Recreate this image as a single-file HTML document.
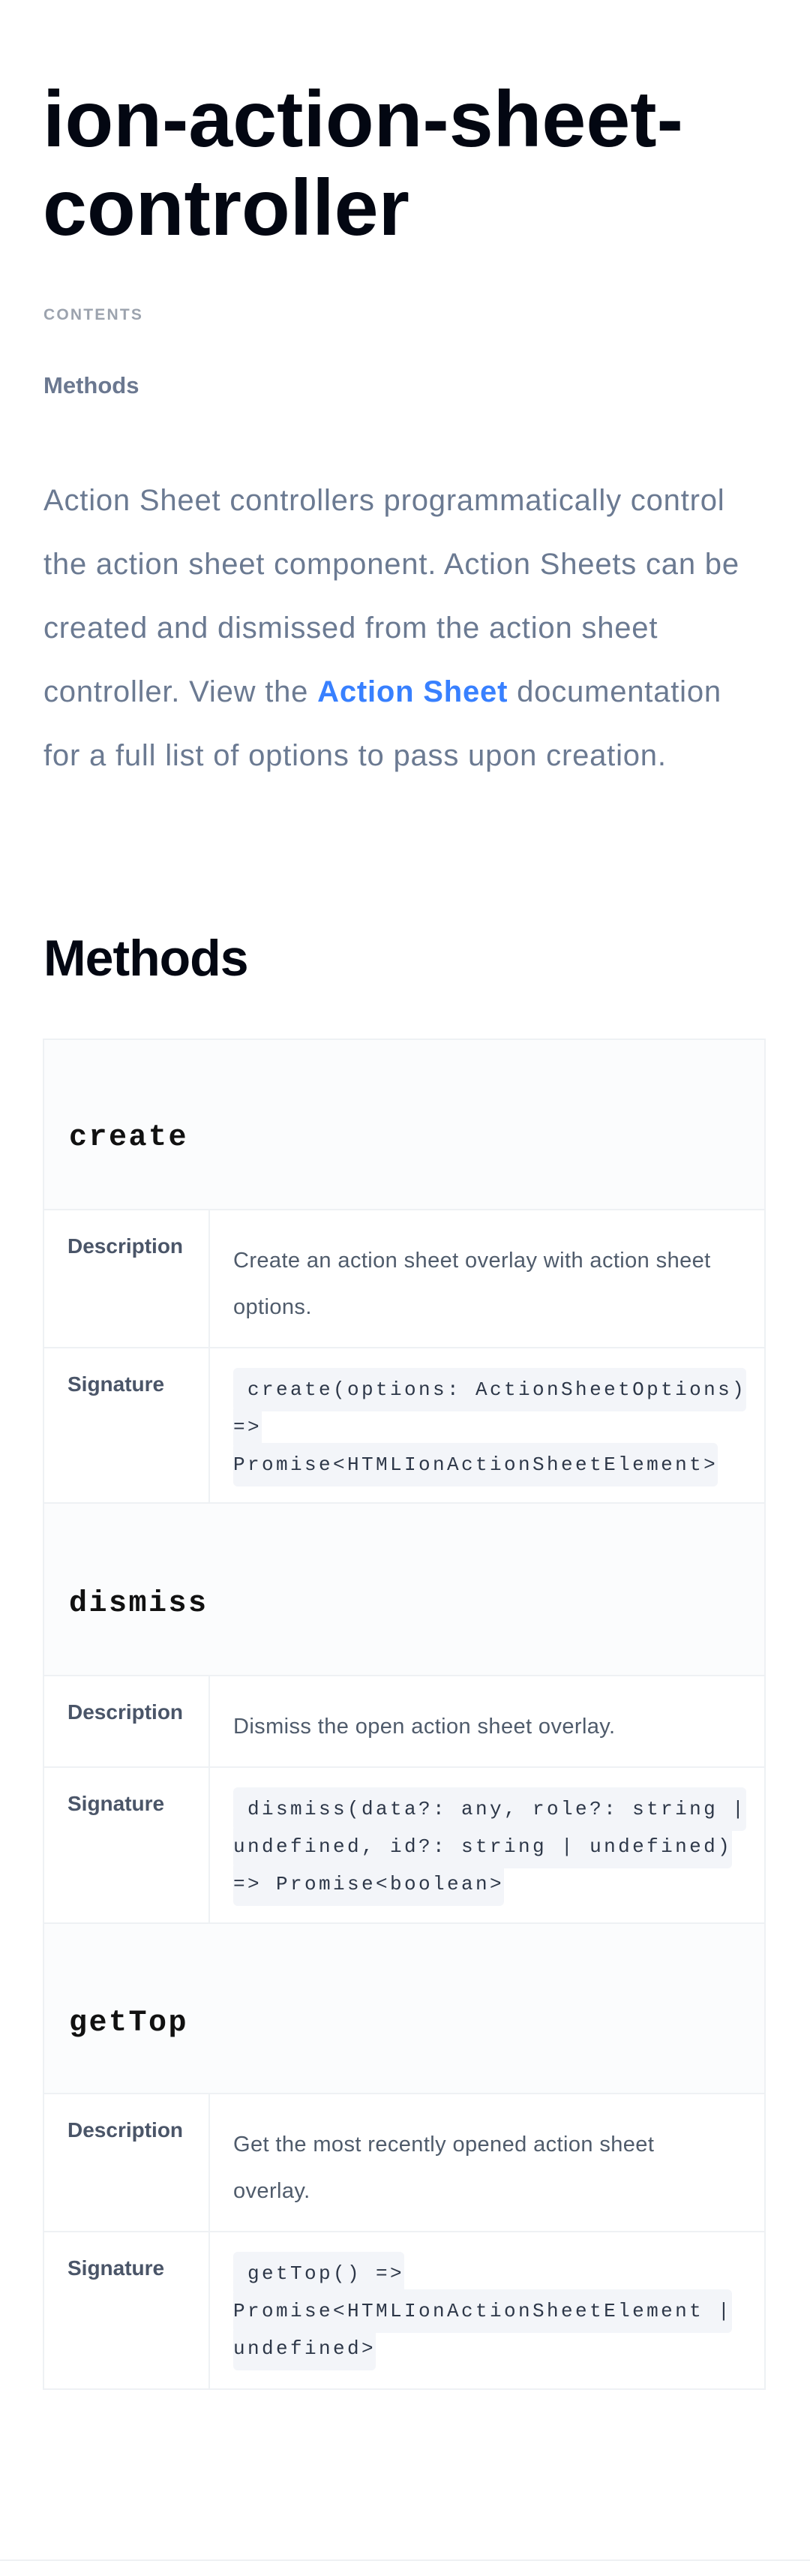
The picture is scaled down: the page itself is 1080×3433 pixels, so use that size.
<!DOCTYPE html>
<html><head><meta charset="utf-8"><style>
*{margin:0;padding:0;box-sizing:border-box}
body{width:1080px;height:3433px;background:#fff;font-family:"Liberation Sans",sans-serif;position:relative;overflow:hidden}
.abs{position:absolute}
h1{position:absolute;left:57px;top:100px;font-size:106px;line-height:118px;font-weight:700;color:#030712;letter-spacing:0px}
.contents{left:58px;top:408px;font-size:21px;font-weight:700;color:#9ca3ae;letter-spacing:2.2px}
.mlink{left:58px;top:496px;font-size:31px;font-weight:700;color:#6b7890}
.para{left:58px;top:625px;width:945px;font-size:40px;line-height:85px;color:#6b7a92;letter-spacing:0.8px}
.para b{color:#3880ff;font-weight:700}
h2{position:absolute;left:58px;top:1238px;font-size:68px;font-weight:700;color:#030712;letter-spacing:-1px}
.tbl{position:absolute;left:57px;top:1384px;width:964px;border:2px solid #eef1f4;border-bottom:none}
.hdr{background:#fbfcfd;border-bottom:2px solid #eef1f4;position:relative;font-family:"Liberation Mono",monospace;font-weight:700;font-size:40px;letter-spacing:2.5px;color:#111;padding-left:33px}
.row{border-bottom:2px solid #eef1f4;position:relative;display:flex}
.lbl{width:221px;border-right:2px solid #eef1f4;padding:32px 0 0 31px;font-size:28px;font-weight:700;color:#4a5568;flex:none}
.val{padding:36px 50px 0 31px;font-size:29px;line-height:62px;color:#4f5b6b;letter-spacing:0.4px}
.code{padding:30px 10px 0 31px;font-family:"Liberation Mono",monospace;font-size:26px;letter-spacing:3.4px;line-height:50px;color:#2d3748}
.code span{background:#f3f5f9;padding:14px 0 14px 0;box-decoration-break:clone;-webkit-box-decoration-break:clone;border-radius:6px}
.foot{left:0;top:3411px;width:1080px;height:2px;background:#eef0f3}
</style></head><body>
<h1>ion-action-sheet-<br>controller</h1>
<div class="abs contents">CONTENTS</div>
<div class="abs mlink">Methods</div>
<div class="abs para">Action Sheet controllers programmatically control the action sheet component. Action Sheets can be created and dismissed from the action sheet controller. View the <b>Action Sheet</b> documentation for a full list of options to pass upon creation.</div>
<h2>Methods</h2>
<div class="tbl">
 <div class="hdr" style="height:227px;line-height:262px">create</div>
 <div class="row" style="height:184px"><div class="lbl">Description</div><div class="val">Create an action sheet overlay with action sheet options.</div></div>
 <div class="row" style="height:207px"><div class="lbl">Signature</div><div class="code"><span>&nbsp;create(options: ActionSheetOptions) =&gt; Promise&lt;HTMLIonActionSheetElement&gt;</span></div></div>
 <div class="hdr" style="height:230px;line-height:268px">dismiss</div>
 <div class="row" style="height:122px"><div class="lbl">Description</div><div class="val">Dismiss the open action sheet overlay.</div></div>
 <div class="row" style="height:208px"><div class="lbl">Signature</div><div class="code"><span>&nbsp;dismiss(data?: any, role?: string | undefined, id?: string | undefined) =&gt; Promise&lt;boolean&gt;</span></div></div>
 <div class="hdr" style="height:227px;line-height:266px">getTop</div>
 <div class="row" style="height:184px"><div class="lbl">Description</div><div class="val">Get the most recently opened action sheet overlay.</div></div>
 <div class="row" style="height:210px"><div class="lbl">Signature</div><div class="code"><span>&nbsp;getTop() =&gt; Promise&lt;HTMLIonActionSheetElement | undefined&gt;</span></div></div>
</div>
<div class="abs foot"></div>
</body></html>
